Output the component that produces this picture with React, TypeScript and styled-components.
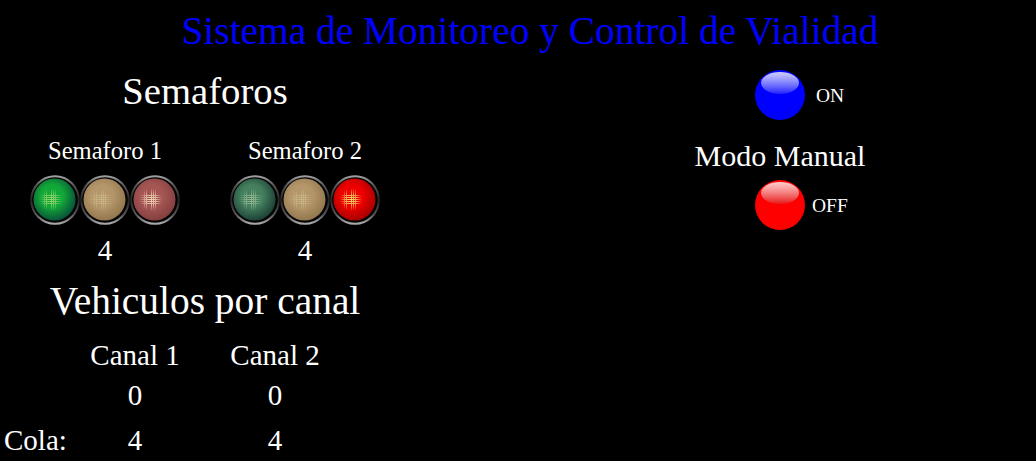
import React, { useId } from 'react';
import styled, { createGlobalStyle } from 'styled-components';

const GlobalStyle = createGlobalStyle`
  html, body {
    margin: 0;
    padding: 0;
    background: #000;
    overflow: hidden;
  }
`;

const Page = styled.div`
  width: 1036px;
  height: 461px;
  background: #000;
  color: #fff;
  font-family: 'Liberation Serif', 'Times New Roman', serif;
  overflow: hidden;
`;

const Title = styled.h1`
  margin: 0;
  padding-left: 24px;
  height: 61px;
  line-height: 62px;
  font-size: 39.4px;
  font-weight: 400;
  text-align: center;
  color: #0000ff;
`;

const Columns = styled.div`
  display: flex;
`;

const LeftColumn = styled.section`
  width: 410px;
  display: flex;
  flex-direction: column;
`;

const SectionTitle = styled.h2<{ $size: number }>`
  margin: 0;
  height: 60px;
  line-height: 60px;
  font-size: ${(props) => props.$size}px;
  font-weight: 400;
  text-align: center;
`;

const Semaphores = styled.div`
  display: flex;
  padding: 15px 5px 5px;
`;

const Semaphore = styled.div`
  width: 200px;
  display: flex;
  flex-direction: column;
  align-items: center;
`;

const SemaphoreName = styled.div`
  height: 30px;
  line-height: 30px;
  font-size: 24.6px;
  margin-bottom: 9px;
`;

const Lights = styled.div`
  display: flex;
  height: 50px;
  margin-bottom: 11px;
`;

const LightIcon = styled.svg`
  display: block;
  flex: none;
  width: 50px;
  height: 50px;
  overflow: visible;
`;

const Count = styled.div`
  height: 30px;
  line-height: 28px;
  font-size: 29px;
`;

const CanalGrid = styled.div`
  display: grid;
  grid-template-columns: 65px 140px 140px;
  grid-template-rows: 30px 40px 45px;
  align-items: end;
  padding-top: 9px;
  font-size: 29px;
  line-height: 30px;
  text-align: center;
`;

const RowLabel = styled.div`
  grid-column: 1;
  padding-left: 4px;
  text-align: left;
  white-space: nowrap;
`;

const CanalCell = styled.div<{ $column: number }>`
  grid-column: ${(props) => props.$column};
`;

const RightColumn = styled.section`
  margin-left: 280px;
  width: 180px;
  display: flex;
  flex-direction: column;
  align-items: center;
  padding-top: 9px;
`;

const ToggleRow = styled.div`
  position: relative;
  width: 50px;
  height: 50px;
`;

const ToggleLabel = styled.span<{ $left: number }>`
  position: absolute;
  left: ${(props) => props.$left}px;
  top: 16px;
  font-size: 19.5px;
  line-height: 20px;
`;

const ModeTitle = styled.div`
  height: 30px;
  line-height: 29px;
  margin: 21px 0 9px;
  font-size: 30px;
  white-space: nowrap;
`;

type LightProps = {
  center: string;
  edge: string;
  glint: string;
  glintOpacity: number;
};

const GLINT_X = [14.5, 16.5, 21.5, 23.5, 25.5];
const GLINT_Y = [20.5, 22.5, 24.5, 26.5, 28.5];

function Light({ center, edge, glint, glintOpacity }: LightProps) {
  const id = useId();
  return (
    <LightIcon viewBox="0 0 50 50">
      <defs>
        <linearGradient id={`${id}r`} x1="0" y1="0" x2="0" y2="1">
          <stop offset="0" stopColor="#a8a8a8" />
          <stop offset="0.2" stopColor="#585858" />
          <stop offset="0.5" stopColor="#242424" />
          <stop offset="0.8" stopColor="#585858" />
          <stop offset="1" stopColor="#b4b4b4" />
        </linearGradient>
        <radialGradient id={`${id}l`} cx="0.44" cy="0.42" r="0.66">
          <stop offset="0" stopColor={center} />
          <stop offset="0.4" stopColor={center} />
          <stop offset="1" stopColor={edge} />
        </radialGradient>
        <radialGradient id={`${id}g`} cx="0.5" cy="0.5" r="0.5">
          <stop offset="0" stopColor="#fff" />
          <stop offset="0.5" stopColor="#fff" stopOpacity="0.7" />
          <stop offset="1" stopColor="#fff" stopOpacity="0" />
        </radialGradient>
        <mask id={`${id}m`} maskUnits="userSpaceOnUse" x="0" y="0" width="50" height="50">
          <circle cx="21" cy="24.5" r="11.5" fill={`url(#${id}g)`} />
        </mask>
      </defs>
      <circle cx="25" cy="25" r="24.8" fill={`url(#${id}r)`} />
      <circle cx="25" cy="25" r="22.8" fill="#040404" />
      <circle cx="24.5" cy="24.5" r="21" fill={`url(#${id}l)`} />
      <g stroke={glint} strokeWidth="1" opacity={glintOpacity} mask={`url(#${id}m)`}>
        {GLINT_X.map((x) => (
          <line key={`v${x}`} x1={x} y1="12" x2={x} y2="36" />
        ))}
        {GLINT_Y.map((y) => (
          <line key={`h${y}`} x1="10" y1={y} x2="34" y2={y} />
        ))}
      </g>
    </LightIcon>
  );
}

function Ball({ color, shine }: { color: string; shine: string }) {
  const id = useId();
  return (
    <svg width="50" height="50" viewBox="0 0 50 50">
      <defs>
        <linearGradient id={id} x1="0" y1="0" x2="0" y2="1">
          <stop offset="0" stopColor="#fff" stopOpacity="0.8" />
          <stop offset="1" stopColor={shine} stopOpacity="1" />
        </linearGradient>
      </defs>
      <circle cx="25" cy="25" r="25" fill={color} />
      <ellipse cx="25" cy="13" rx="19" ry="11" fill={`url(#${id})`} />
    </svg>
  );
}

const GREEN_ON = { center: '#12a838', edge: '#06403a', glint: '#c8e888', glintOpacity: 0.75 };
const GREEN_OFF = { center: '#447f5e', edge: '#14342c', glint: '#d0e0b8', glintOpacity: 0.6 };
const AMBER_OFF = { center: '#b39669', edge: '#8c7048', glint: '#e8e0b0', glintOpacity: 0.45 };
const RED_DIM = { center: '#a55654', edge: '#7c3a3a', glint: '#fff0c8', glintOpacity: 0.85 };
const RED_ON = { center: '#ee0000', edge: '#980000', glint: '#ffe060', glintOpacity: 1 };

export default function App() {
  return (
    <Page>
      <GlobalStyle />
      <Title>Sistema de Monitoreo y Control de Vialidad</Title>
      <Columns>
        <LeftColumn>
          <SectionTitle $size={38.7}>Semaforos</SectionTitle>
          <Semaphores>
            <Semaphore>
              <SemaphoreName>Semaforo 1</SemaphoreName>
              <Lights>
                <Light {...GREEN_ON} />
                <Light {...AMBER_OFF} />
                <Light {...RED_DIM} />
              </Lights>
              <Count>4</Count>
            </Semaphore>
            <Semaphore>
              <SemaphoreName>Semaforo 2</SemaphoreName>
              <Lights>
                <Light {...GREEN_OFF} />
                <Light {...AMBER_OFF} />
                <Light {...RED_ON} />
              </Lights>
              <Count>4</Count>
            </Semaphore>
          </Semaphores>
          <SectionTitle $size={39.4}>Vehiculos por canal</SectionTitle>
          <CanalGrid>
            <CanalCell $column={2}>Canal 1</CanalCell>
            <CanalCell $column={3}>Canal 2</CanalCell>
            <CanalCell $column={2}>0</CanalCell>
            <CanalCell $column={3}>0</CanalCell>
            <RowLabel>Cola:</RowLabel>
            <CanalCell $column={2}>4</CanalCell>
            <CanalCell $column={3}>4</CanalCell>
          </CanalGrid>
        </LeftColumn>
        <RightColumn>
          <ToggleRow>
            <Ball color="#0000ff" shine="#2020ff" />
            <ToggleLabel $left={61}>ON</ToggleLabel>
          </ToggleRow>
          <ModeTitle>Modo Manual</ModeTitle>
          <ToggleRow>
            <Ball color="#ff0000" shine="#e81818" />
            <ToggleLabel $left={57}>OFF</ToggleLabel>
          </ToggleRow>
        </RightColumn>
      </Columns>
    </Page>
  );
}
